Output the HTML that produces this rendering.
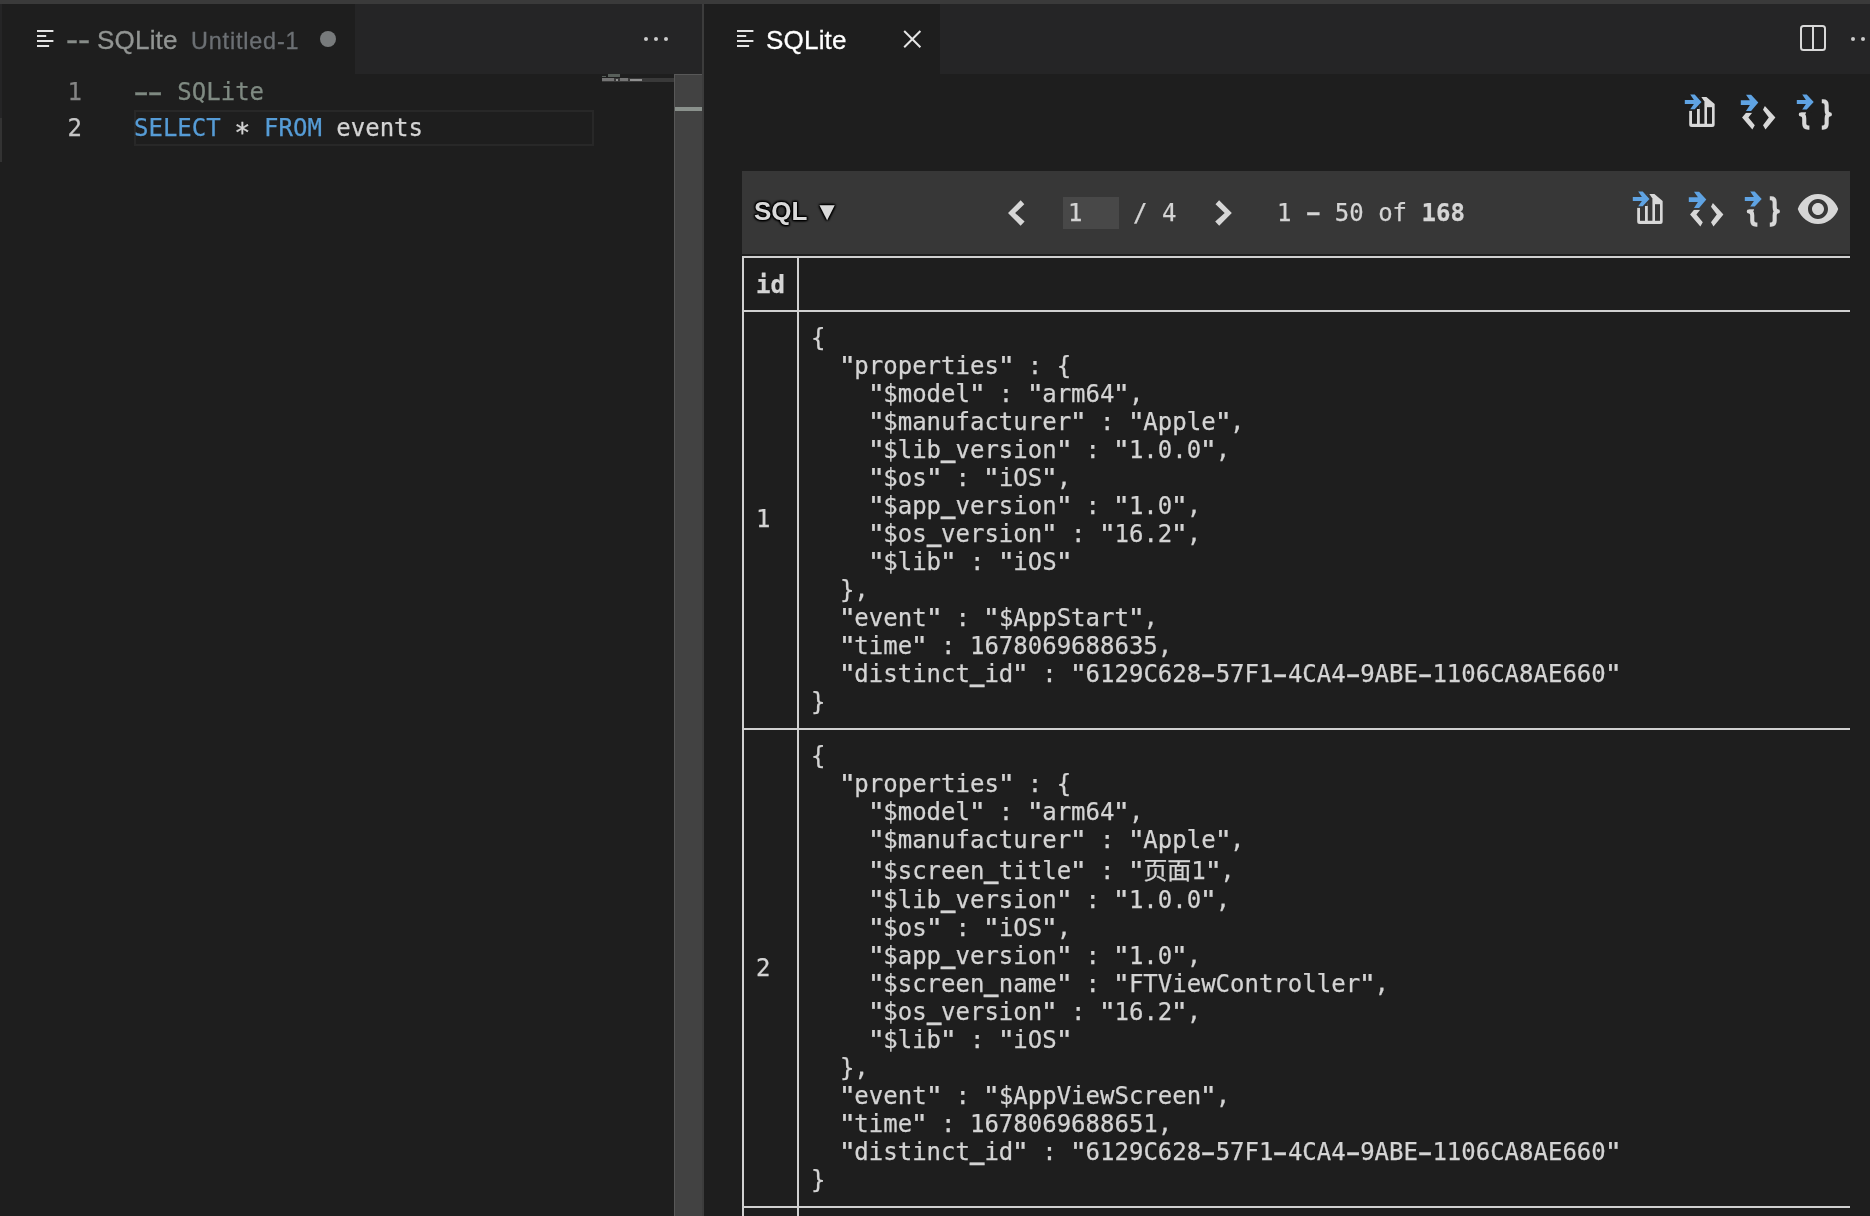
<!DOCTYPE html>
<html lang="en">
<head>
<meta charset="utf-8">
<title>SQLite</title>
<style>
*{box-sizing:border-box;margin:0;padding:0}
html,body{width:1870px;height:1216px;overflow:hidden;background:#1e1e1e}
body{position:relative;font-family:"Liberation Sans","Noto Sans CJK SC",sans-serif;color:#d4d4d4}
.abs{position:absolute}
.mono,.tablabel,#sql{will-change:transform}
.mono{font-family:"DejaVu Sans Mono","Liberation Mono","Noto Sans CJK SC",monospace;-webkit-text-stroke:.25px currentColor}
#topstrip{left:0;top:0;width:1870px;height:4px;background:#3a3a3a}
/* left pane */
#ltabs{left:2px;top:4px;width:700px;height:70px;background:#252526}
#ltab{left:2px;top:4px;width:353px;height:70px;background:#1e1e1e}
#lsash1{left:0;top:4px;width:2px;height:114px;background:#252526}
#lsash2{left:0;top:118px;width:2px;height:44px;background:#333333}
.tablabel{font-size:26px;line-height:30px;white-space:pre;-webkit-text-stroke:.3px currentColor}
#lt0{left:66.2px;top:25px;color:#878c88}
#lt0 .dh{display:inline-block;width:12.3px;transform:scale(1.4,1.3);transform-origin:0 60%}
#lt1{left:97.4px;top:25px;color:#929593;letter-spacing:.2px}
#lt2{left:190.5px;top:25.7px;color:#6c7074;font-size:23.4px;letter-spacing:.83px}
#ldot{left:320px;top:31px;width:16px;height:16px;border-radius:50%;background:#787b7c}
.dots i{position:absolute;width:4px;height:4px;border-radius:50%;background:#cccccc;top:0}
#ldots{left:644px;top:37px}
/* editor */
.mh{display:inline-block;transform:scale(1.85,1.35)}
.ast{display:inline-block;transform:translateY(4.7px) scale(1.12)}
.ln{font-size:24px;line-height:36px;width:40px;text-align:right;left:42px}
.code{font-size:24px;line-height:36px;left:134px;white-space:pre}
#curline{left:134px;top:110px;width:460px;height:36px;border:2px solid #282828}
#mmhl{left:602px;top:78px;width:72px;height:4px;background:#393939}
.mmb{height:3px;opacity:.6}
#lscroll{left:674px;top:74px;width:28px;height:1142px;background:#424242;border-left:1px solid #585858;border-top:1px solid #585858}
#lscrollmark{left:675px;top:107px;width:27px;height:4px;background:#8a918c}
#divider{left:702px;top:4px;width:2px;height:1212px;background:#3c3c3c}
/* right pane */
#rtabs{left:704px;top:4px;width:1166px;height:70px;background:#252526}
#rtab{left:704px;top:4px;width:236px;height:70px;background:#1e1e1e}
#rt1{left:766px;top:25px;color:#ffffff;letter-spacing:.2px}
#rdots{left:1851px;top:37px}
/* toolbar */
#tbar{left:742px;top:171px;width:1108px;height:83px;background:#373737}
#sql{left:754px;top:196.4px;font-size:26px;line-height:30px;font-weight:bold;color:#d9d9d9;text-shadow:0 0 3px #000,1px 1px 2px #000,-1px -1px 2px #000,1px -1px 2px #000,-1px 1px 2px #000}
.tb{font-size:24px;line-height:28px;white-space:pre;color:#d4d4d4}
#pgin{left:1063px;top:197px;width:56px;height:32px;background:#484848}
/* table */
.hl{background:#d0d0d0;height:2px;left:742px;width:1108px}
.vl{background:#d0d0d0;width:2px;top:256px;height:960px}
.nd{display:inline-block;transform:translateY(-1.2px) scale(.84,1.5)}
.us{display:inline-block;transform:translateY(-1.8px) scale(1.02,2.3);transform-origin:50% 96%}
.q{display:inline-block;transform:scaleX(1.25)}
.json{left:811px;font-size:24px;line-height:28px;white-space:pre;color:#d4d4d4}
.idc{left:756px;font-size:24px;line-height:28px;color:#d4d4d4}
</style>
</head>
<body>
<div id="topstrip" class="abs"></div>

<!-- LEFT PANE -->
<div id="ltabs" class="abs"></div>
<div id="ltab" class="abs"></div>
<div id="lsash1" class="abs"></div>
<div id="lsash2" class="abs"></div>
<svg class="abs" style="left:37px;top:30px" width="17" height="18" viewBox="0 0 17 18"><g fill="#e4e4e4"><rect x="0" y="0" width="16.4" height="2"/><rect x="0" y="5" width="9.2" height="2"/><rect x="0" y="10" width="16.4" height="2"/><rect x="0" y="15" width="12.1" height="2"/></g></svg>
<div id="lt0" class="abs tablabel"><span class="dh">-</span><span class="dh">-</span></div>
<div id="lt1" class="abs tablabel">SQLite</div>
<div id="lt2" class="abs tablabel">Untitled-1</div>
<div id="ldot" class="abs"></div>
<div id="ldots" class="abs dots"><i style="left:0"></i><i style="left:10px"></i><i style="left:20px"></i></div>

<div class="abs mono ln" style="top:74px;color:#858585">1</div>
<div class="abs mono ln" style="top:110px;color:#c6c6c6">2</div>
<div id="curline" class="abs"></div>
<div class="abs mono code" style="top:74px;color:#7f8a82"><span class="mh">-</span><span class="mh">-</span> SQLite</div>
<div class="abs mono code" style="top:110px;color:#d4d4d4"><span style="color:#569cd6">SELECT</span> <span class="ast">*</span> <span style="color:#569cd6">FROM</span> events</div>
<div id="mmhl" class="abs"></div>
<div class="abs mmb" style="left:602px;top:74.5px;width:4px;background:#7f8a82;height:1px;top:75.5px"></div>
<div class="abs mmb" style="left:608px;top:74.3px;width:12px;background:#7f8a82"></div>
<div class="abs mmb" style="left:602px;top:78.4px;width:12px;background:#9c9c9c"></div>
<div class="abs mmb" style="left:616px;top:79px;width:2px;height:2px;background:#cccccc"></div>
<div class="abs mmb" style="left:620px;top:78.4px;width:8px;background:#9c9c9c"></div>
<div class="abs mmb" style="left:630px;top:79px;width:12px;height:2.4px;background:#cccccc"></div>
<div id="lscroll" class="abs"></div>
<div id="lscrollmark" class="abs"></div>
<div id="divider" class="abs"></div>

<!-- RIGHT PANE -->
<div id="rtabs" class="abs"></div>
<div id="rtab" class="abs"></div>
<svg class="abs" style="left:737px;top:30px" width="17" height="18" viewBox="0 0 17 18"><g fill="#e4e4e4"><rect x="0" y="0" width="16.4" height="2"/><rect x="0" y="5" width="9.2" height="2"/><rect x="0" y="10" width="16.4" height="2"/><rect x="0" y="15" width="12.1" height="2"/></g></svg>
<div id="rt1" class="abs tablabel">SQLite</div>
<svg class="abs" style="left:900px;top:27px" width="24" height="24" viewBox="0 0 24 24"><path d="M4.2 4 L20.4 20.2 M20.4 4 L4.2 20.2" stroke="#e6e6e6" stroke-width="2" fill="none"/></svg>
<svg class="abs" style="left:1798px;top:23px" width="30" height="30" viewBox="0 0 30 30"><rect x="3" y="3" width="24" height="24" rx="2.5" fill="none" stroke="#d8d8d8" stroke-width="2"/><rect x="14" y="3" width="2" height="24" fill="#d8d8d8"/></svg>
<div id="rdots" class="abs dots"><i style="left:0"></i><i style="left:10px"></i><i style="left:20px"></i></div>

<!-- TOOLBAR -->
<div id="tbar" class="abs"></div>
<div id="sql" class="abs">SQL ▼</div>
<div id="pgin" class="abs"></div>
<div class="abs mono tb" style="left:1068px;top:198.8px">1</div>
<div class="abs mono tb" style="left:1133px;top:198.8px">/ 4</div>
<div class="abs mono tb" style="left:1277px;top:198.8px">1 <span class="nd">–</span> 50 of <b>168</b></div>


<svg class="abs" style="left:1000px;top:195px" width="40" height="37" viewBox="0 0 40 37"><path d="M8 18 L20.7 5.2 L24.3 9.2 L15.1 18 L24.6 26.6 L20.6 30.7 Z" fill="#d6d6d6"/></svg>
<svg class="abs" style="left:1208px;top:195px" width="40" height="37" viewBox="0 0 40 37"><path d="M23.8 18 L11.1 5.2 L7.5 9.2 L16.7 18 L7.2 26.6 L11.2 30.7 Z" fill="#d6d6d6"/></svg>
<svg class="abs" style="left:1676px;top:86px;--bg:#1e1e1e" width="50" height="50" viewBox="0 0 50 50">
<path d="M13.2 24.7 H21 V11.1 H30.4 L38.65 18.1 V38.4 a2.5 2.5 0 0 1 -2.5 2.5 H15.7 a2.5 2.5 0 0 1 -2.5 -2.5 Z" fill="#d8d8d8"/>
<rect x="16" y="24" width="5" height="13.8" fill="var(--bg)"/>
<path d="M23.8 10.5 H25 L28.4 15.6 V37.8 H23.8 Z" fill="var(--bg)"/>
<rect x="21" y="11" width="2.8" height="12" fill="var(--bg)"/>
<rect x="31" y="21.2" width="5" height="16.6" fill="var(--bg)"/>
<path d="M8.8 14 H17.9 L14.2 8.4 H18.7 L25.5 15.9 L18.7 23.3 H14.2 L17.9 17.9 H8.8 Z" fill="#5fa3e3" stroke="var(--bg)" stroke-width="2.6" paint-order="stroke" stroke-linejoin="miter"/>
</svg>
<svg class="abs" style="left:1732px;top:86px;--bg:#1e1e1e" width="50" height="50" viewBox="0 0 50 50">
<path d="M10.07 31.46 L20.35 19.3 L22.8 23.6 L16.4 31.46 L22.8 39.3 L20.35 43.6 Z" fill="#d8d8d8"/>
<path d="M43.4 31.46 L32.9 19.9 L31 23.85 L36.8 31.46 L31 39.3 L33.5 43.6 Z" fill="#d8d8d8"/>
<rect x="8" y="18" width="16" height="8.9" fill="var(--bg)"/>
<path d="M8.8 14.2 H17.9 L14 8.8 H19.1 L26.3 16.5 L19.1 24.9 H14 L17.9 19.1 H8.8 Z" fill="#5fa3e3"/>
</svg>
<svg class="abs" style="left:1788px;top:86px;--bg:#1e1e1e" width="50" height="50" viewBox="0 0 50 50">
<path d="M33.8 15.3 H35 Q38.65 15.3 38.65 19.2 V24.2 Q38.65 28.4 41.9 28.4 Q38.65 28.4 38.65 32.6 V37.8 Q38.65 41.6 35 41.6 H33.8" fill="none" stroke="#d8d8d8" stroke-width="4.1" stroke-linejoin="round"/>
<path d="M21.4 15.3 H20.2 Q16.25 15.3 16.25 19.2 V24.2 Q16.25 28.4 12.8 28.4 Q16.25 28.4 16.25 32.6 V37.8 Q16.25 41.6 20.2 41.6 H21.4" fill="none" stroke="#d8d8d8" stroke-width="4.1" stroke-linejoin="round"/>
<rect x="8" y="10" width="16" height="16.3" fill="var(--bg)"/>
<path d="M8.8 14 H17.9 L14.2 8.4 H18.7 L25.7 15.9 L18.7 23.4 H14.2 L17.9 18.1 H8.8 Z" fill="#5fa3e3"/>
</svg>
<svg class="abs" style="left:1623.5px;top:182.8px;--bg:#373737" width="50" height="50" viewBox="0 0 50 50">
<path d="M13.2 24.7 H21 V11.1 H30.4 L38.65 18.1 V38.4 a2.5 2.5 0 0 1 -2.5 2.5 H15.7 a2.5 2.5 0 0 1 -2.5 -2.5 Z" fill="#d8d8d8"/>
<rect x="16" y="24" width="5" height="13.8" fill="var(--bg)"/>
<path d="M23.8 10.5 H25 L28.4 15.6 V37.8 H23.8 Z" fill="var(--bg)"/>
<rect x="21" y="11" width="2.8" height="12" fill="var(--bg)"/>
<rect x="31" y="21.2" width="5" height="16.6" fill="var(--bg)"/>
<path d="M8.8 14 H17.9 L14.2 8.4 H18.7 L25.5 15.9 L18.7 23.3 H14.2 L17.9 17.9 H8.8 Z" fill="#5fa3e3" stroke="var(--bg)" stroke-width="2.6" paint-order="stroke" stroke-linejoin="miter"/>
</svg>
<svg class="abs" style="left:1679.5px;top:182.8px;--bg:#373737" width="50" height="50" viewBox="0 0 50 50">
<path d="M10.07 31.46 L20.35 19.3 L22.8 23.6 L16.4 31.46 L22.8 39.3 L20.35 43.6 Z" fill="#d8d8d8"/>
<path d="M43.4 31.46 L32.9 19.9 L31 23.85 L36.8 31.46 L31 39.3 L33.5 43.6 Z" fill="#d8d8d8"/>
<rect x="8" y="18" width="16" height="8.9" fill="var(--bg)"/>
<path d="M8.8 14.2 H17.9 L14 8.8 H19.1 L26.3 16.5 L19.1 24.9 H14 L17.9 19.1 H8.8 Z" fill="#5fa3e3"/>
</svg>
<svg class="abs" style="left:1735.5px;top:182.8px;--bg:#373737" width="50" height="50" viewBox="0 0 50 50">
<path d="M33.8 15.3 H35 Q38.65 15.3 38.65 19.2 V24.2 Q38.65 28.4 41.9 28.4 Q38.65 28.4 38.65 32.6 V37.8 Q38.65 41.6 35 41.6 H33.8" fill="none" stroke="#d8d8d8" stroke-width="4.1" stroke-linejoin="round"/>
<path d="M21.4 15.3 H20.2 Q16.25 15.3 16.25 19.2 V24.2 Q16.25 28.4 12.8 28.4 Q16.25 28.4 16.25 32.6 V37.8 Q16.25 41.6 20.2 41.6 H21.4" fill="none" stroke="#d8d8d8" stroke-width="4.1" stroke-linejoin="round"/>
<rect x="8" y="10" width="16" height="16.3" fill="var(--bg)"/>
<path d="M8.8 14 H17.9 L14.2 8.4 H18.7 L25.7 15.9 L18.7 23.4 H14.2 L17.9 18.1 H8.8 Z" fill="#5fa3e3"/>
</svg>
<svg class="abs" style="left:1794px;top:185px" width="48" height="48" viewBox="0 0 24 24"><path fill="#d6d6d6" d="M12 4.5C7.4 4.5 3.47 7.61 1.88 12c1.59 4.39 5.52 7.5 10.12 7.5s8.53-3.11 10.12-7.5c-1.59-4.39-5.52-7.5-10.12-7.5zM12 17c-2.76 0-5-2.24-5-5s2.24-5 5-5 5 2.24 5 5-2.24 5-5 5zm0-8c-1.66 0-3 1.34-3 3s1.34 3 3 3 3-1.34 3-3-1.34-3-3-3z"/></svg>

<!-- TABLE -->
<div class="abs hl" style="top:256px"></div>
<div class="abs hl" style="top:310px"></div>
<div class="abs hl" style="top:728px"></div>
<div class="abs hl" style="top:1206px"></div>
<div class="abs vl" style="left:742px"></div>
<div class="abs vl" style="left:797px"></div>
<div class="abs mono idc" style="top:270.7px;font-weight:bold">id</div>
<div class="abs mono idc" style="top:505px">1</div>
<div class="abs mono idc" style="top:954px">2</div>
<div class="abs mono json" style="top:324px">{
  <span class="q">"</span>properties<span class="q">"</span> : {
    <span class="q">"</span>$model<span class="q">"</span> : <span class="q">"</span>arm64<span class="q">"</span>,
    <span class="q">"</span>$manufacturer<span class="q">"</span> : <span class="q">"</span>Apple<span class="q">"</span>,
    <span class="q">"</span>$lib<span class="us">_</span>version<span class="q">"</span> : <span class="q">"</span>1.0.0<span class="q">"</span>,
    <span class="q">"</span>$os<span class="q">"</span> : <span class="q">"</span>iOS<span class="q">"</span>,
    <span class="q">"</span>$app<span class="us">_</span>version<span class="q">"</span> : <span class="q">"</span>1.0<span class="q">"</span>,
    <span class="q">"</span>$os<span class="us">_</span>version<span class="q">"</span> : <span class="q">"</span>16.2<span class="q">"</span>,
    <span class="q">"</span>$lib<span class="q">"</span> : <span class="q">"</span>iOS<span class="q">"</span>
  },
  <span class="q">"</span>event<span class="q">"</span> : <span class="q">"</span>$AppStart<span class="q">"</span>,
  <span class="q">"</span>time<span class="q">"</span> : 1678069688635,
  <span class="q">"</span>distinct<span class="us">_</span>id<span class="q">"</span> : <span class="q">"</span>6129C628<span class="mh">-</span>57F1<span class="mh">-</span>4CA4<span class="mh">-</span>9ABE<span class="mh">-</span>1106CA8AE660<span class="q">"</span>
}</div>
<div class="abs mono json" style="top:742px">{
  <span class="q">"</span>properties<span class="q">"</span> : {
    <span class="q">"</span>$model<span class="q">"</span> : <span class="q">"</span>arm64<span class="q">"</span>,
    <span class="q">"</span>$manufacturer<span class="q">"</span> : <span class="q">"</span>Apple<span class="q">"</span>,</div>
<div class="abs mono json" style="top:857px">    <span class="q">"</span>$screen<span class="us">_</span>title<span class="q">"</span> : <span class="q">"</span>页面1<span class="q">"</span>,</div>
<div class="abs mono json" style="top:886px">    <span class="q">"</span>$lib<span class="us">_</span>version<span class="q">"</span> : <span class="q">"</span>1.0.0<span class="q">"</span>,
    <span class="q">"</span>$os<span class="q">"</span> : <span class="q">"</span>iOS<span class="q">"</span>,
    <span class="q">"</span>$app<span class="us">_</span>version<span class="q">"</span> : <span class="q">"</span>1.0<span class="q">"</span>,
    <span class="q">"</span>$screen<span class="us">_</span>name<span class="q">"</span> : <span class="q">"</span>FTViewController<span class="q">"</span>,
    <span class="q">"</span>$os<span class="us">_</span>version<span class="q">"</span> : <span class="q">"</span>16.2<span class="q">"</span>,
    <span class="q">"</span>$lib<span class="q">"</span> : <span class="q">"</span>iOS<span class="q">"</span>
  },
  <span class="q">"</span>event<span class="q">"</span> : <span class="q">"</span>$AppViewScreen<span class="q">"</span>,
  <span class="q">"</span>time<span class="q">"</span> : 1678069688651,
  <span class="q">"</span>distinct<span class="us">_</span>id<span class="q">"</span> : <span class="q">"</span>6129C628<span class="mh">-</span>57F1<span class="mh">-</span>4CA4<span class="mh">-</span>9ABE<span class="mh">-</span>1106CA8AE660<span class="q">"</span>
}</div>
</body>
</html>
